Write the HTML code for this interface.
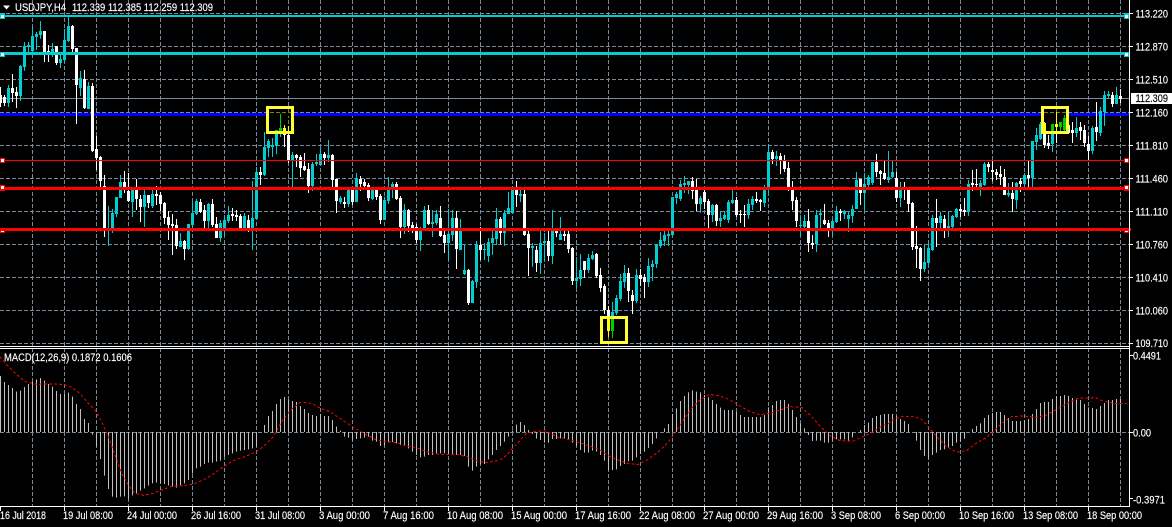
<!DOCTYPE html>
<html><head><meta charset="utf-8"><title>USDJPY,H4</title>
<style>html,body{margin:0;padding:0;background:#000;width:1172px;height:527px;overflow:hidden}svg{display:block}text{font-family:"Liberation Sans",sans-serif;font-size:11px;fill:#fff;stroke:#fff;stroke-width:.15px}</style></head>
<body>
<svg width="1172" height="527" viewBox="0 0 1172 527" xmlns="http://www.w3.org/2000/svg">
<rect width="1172" height="527" fill="#000"/>
<g stroke="#778899" stroke-width="1" stroke-dasharray="4 2" shape-rendering="crispEdges" fill="none">
<path d="M0 13.5H1129M0 46.5H1129M0 79.5H1129M0 112.5H1129M0 145.5H1129M0 178.5H1129M0 211.5H1129M0 244.5H1129M0 277.5H1129M0 310.5H1129M0 343.5H1129M0 432.5H1129"/>
<path d="M32.5 0V346M64.5 0V346M96.5 0V346M128.5 0V346M160.5 0V346M192.5 0V346M224.5 0V346M256.5 0V346M288.5 0V346M320.5 0V346M352.5 0V346M384.5 0V346M416.5 0V346M448.5 0V346M480.5 0V346M512.5 0V346M544.5 0V346M576.5 0V346M608.5 0V346M640.5 0V346M672.5 0V346M704.5 0V346M736.5 0V346M768.5 0V346M800.5 0V346M832.5 0V346M864.5 0V346M896.5 0V346M928.5 0V346M960.5 0V346M992.5 0V346M1024.5 0V346M1056.5 0V346M1088.5 0V346M1120.5 0V346"/>
<path d="M32.5 348V506M64.5 348V506M96.5 348V506M128.5 348V506M160.5 348V506M192.5 348V506M224.5 348V506M256.5 348V506M288.5 348V506M320.5 348V506M352.5 348V506M384.5 348V506M416.5 348V506M448.5 348V506M480.5 348V506M512.5 348V506M544.5 348V506M576.5 348V506M608.5 348V506M640.5 348V506M672.5 348V506M704.5 348V506M736.5 348V506M768.5 348V506M800.5 348V506M832.5 348V506M864.5 348V506M896.5 348V506M928.5 348V506M960.5 348V506M992.5 348V506M1024.5 348V506M1056.5 348V506M1088.5 348V506M1120.5 348V506"/>
</g>
<rect x="0" y="113" width="1129" height="3" fill="#0000ff" shape-rendering="crispEdges"/>
<rect x="0" y="98" width="1129" height="1" fill="#778899" shape-rendering="crispEdges"/>
<g fill="none" shape-rendering="crispEdges">
<path stroke="#00ced1" stroke-width="1" d="M8.5 85V107M20.5 65V101M24.5 42V71M28.5 42V52M32.5 27V52M36.5 32V50M40.5 21V39M52.5 43V57M60.5 55V68M64.5 29V62M68.5 17V42M80.5 71V96M88.5 82V109M108.5 206V246M112.5 209V233M116.5 197V217M120.5 175V198M132.5 187V217M144.5 190V227M152.5 190V208M180.5 233V247M188.5 224V250M192.5 202V229M196.5 199V215M208.5 203V229M220.5 220V242M224.5 215V236M228.5 206V223M244.5 213V230M252.5 181V250M256.5 167V219M264.5 132V176M268.5 139V157M272.5 138V157M276.5 130V154M280.5 114V137M292.5 152V187M312.5 162V191M316.5 154V166M320.5 148V165M328.5 140V162M340.5 196V204M348.5 187V207M356.5 173V202M372.5 187V200M384.5 197V220M388.5 177V204M392.5 182V198M404.5 204V234M420.5 227V251M424.5 206V231M432.5 210V237M436.5 210V225M448.5 209V260M452.5 210V241M460.5 219V250M464.5 245V275M472.5 280V303M476.5 241V288M484.5 243V260M488.5 238V262M492.5 231V255M496.5 208V245M504.5 210V246M508.5 192V214M512.5 186V214M520.5 187V202M532.5 243V267M540.5 228V274M544.5 233V261M552.5 210V264M560.5 217V240M576.5 257V288M580.5 254V286M588.5 254V273M592.5 251V260M612.5 302V338M616.5 295V315M620.5 274V301M624.5 265V288M636.5 269V303M648.5 258V287M652.5 260V281M656.5 244V268M660.5 232V248M664.5 228V246M668.5 229V246M672.5 197V236M676.5 192V204M680.5 180V201M684.5 176V193M688.5 181V194M700.5 196V213M712.5 204V222M720.5 211V227M724.5 211V220M728.5 200V223M732.5 188V204M748.5 199V219M752.5 196V210M764.5 185V207M768.5 144V194M776.5 151V166M800.5 215V236M804.5 215V230M816.5 210V252M820.5 209V231M832.5 219V236M836.5 206V223M844.5 210V219M848.5 212V232M852.5 205V223M856.5 172V209M864.5 173V211M868.5 175V188M872.5 162V185M888.5 151V183M892.5 160V178M900.5 182V207M924.5 245V272M928.5 243V265M932.5 215V251M940.5 212V229M948.5 212V237M952.5 215V231M956.5 208V218M968.5 180V216M980.5 180V196M984.5 162V186M1008.5 183V197M1016.5 182V209M1024.5 173V186M1032.5 141V188M1036.5 128V150M1040.5 122V140M1052.5 124V152M1060.5 122V131M1064.5 115V133M1076.5 117V137M1092.5 126V154M1100.5 107V136M1104.5 91V126M1108.5 91V98M1116.5 87V104"/>
<path stroke="#00ced1" stroke-width="3" d="M8.5 88V103M20.5 66V96M24.5 46V67M28.5 45V47M32.5 36V51M36.5 34V37M40.5 31V35M52.5 49V55M60.5 59V63M64.5 40V60M68.5 26V41M80.5 78V88M88.5 86V109M108.5 228V229M112.5 213V229M116.5 197V214M120.5 182V198M132.5 189V202M144.5 195V207M152.5 194V206M180.5 241V247M188.5 224V249M192.5 213V225M196.5 201V214M208.5 204V221M220.5 223V238M224.5 220V230M228.5 215V221M244.5 216V229M252.5 218V228M256.5 172V219M264.5 147V175M268.5 141V148M272.5 145V147M276.5 130V146M280.5 128V131M292.5 155V161M312.5 164V186M316.5 162V164M320.5 154V165M328.5 155V158M340.5 198V202M348.5 190V204M356.5 178V202M372.5 190V199M384.5 200V220M388.5 187V201M392.5 184V189M404.5 210V227M420.5 229V240M424.5 210V230M432.5 222V224M436.5 214V223M448.5 234V243M452.5 218V235M460.5 229V250M464.5 270V274M472.5 281V303M476.5 244V282M484.5 249V250M488.5 242V256M492.5 238V243M496.5 219V239M504.5 213V233M508.5 208V214M512.5 188V213M520.5 194V196M532.5 246V248M540.5 243V263M544.5 241V243M552.5 231V256M560.5 234V240M576.5 278V281M580.5 270V279M588.5 258V270M592.5 255V259M612.5 312V331M616.5 298V313M620.5 281V299M624.5 273V282M636.5 275V301M648.5 266V282M652.5 264V267M656.5 244V264M660.5 240V246M664.5 235V241M668.5 234V236M672.5 197V235M676.5 194V198M680.5 184V199M684.5 183V185M688.5 181V185M700.5 198V204M712.5 205V215M720.5 218V221M724.5 215V219M728.5 202V220M732.5 200V203M748.5 204V215M752.5 199V205M764.5 188V203M768.5 152V189M776.5 156V159M800.5 225V226M804.5 221V227M816.5 215V244M820.5 213V215M832.5 221V231M836.5 211V222M844.5 211V214M848.5 215V219M852.5 209V216M856.5 180V209M864.5 184V193M868.5 177V185M872.5 162V183M888.5 177V180M892.5 172V177M900.5 187V198M924.5 262V269M928.5 248V263M932.5 218V250M940.5 216V223M948.5 226V228M952.5 216V227M956.5 209V217M968.5 184V212M980.5 183V187M984.5 164V185M1008.5 193V195M1016.5 183V200M1024.5 175V184M1032.5 141V178M1036.5 135V142M1040.5 124V139M1052.5 124V144M1060.5 122V127M1064.5 118V130M1076.5 128V133M1092.5 128V151M1100.5 111V133M1104.5 95V112M1108.5 94V96M1116.5 95V104"/>
<path stroke="#fff" stroke-width="1" d="M0.5 87V107M4.5 95V106M12.5 74V102M16.5 87V108M44.5 31V62M48.5 45V62M56.5 46V65M72.5 25V55M76.5 48V124M84.5 70V109M92.5 83V152M96.5 136V170M100.5 156V187M104.5 175V237M124.5 171V193M128.5 173V202M136.5 179V210M140.5 195V222M148.5 195V208M156.5 186V205M160.5 192V211M164.5 202V224M168.5 211V240M172.5 214V255M176.5 219V249M184.5 240V260M200.5 199V213M204.5 205V231M212.5 199V227M216.5 217V238M232.5 208V221M236.5 210V221M240.5 214V230M248.5 215V232M260.5 167V185M284.5 125V147M288.5 126V163M296.5 154V167M300.5 155V177M304.5 153V171M308.5 163V193M324.5 152V165M332.5 154V188M336.5 179V213M344.5 197V208M352.5 187V205M360.5 176V191M364.5 179V188M368.5 183V201M376.5 187V200M380.5 194V224M396.5 182V200M400.5 196V238M408.5 209V232M412.5 222V233M416.5 224V243M428.5 205V225M440.5 206V237M444.5 229V253M456.5 211V269M468.5 269V305M480.5 227V260M500.5 217V244M516.5 181V207M524.5 190V236M528.5 230V276M536.5 246V272M548.5 229V261M556.5 228V237M564.5 231V241M568.5 231V253M572.5 247V285M584.5 261V278M596.5 253V278M600.5 268V292M604.5 284V314M608.5 306V337M628.5 268V302M632.5 290V314M640.5 269V286M644.5 274V298M692.5 177V199M696.5 179V211M704.5 190V209M708.5 199V229M716.5 204V226M736.5 197V217M740.5 210V223M744.5 205V227M756.5 192V203M760.5 199V211M772.5 150V164M780.5 153V174M784.5 155V172M788.5 162V191M792.5 181V210M796.5 197V227M808.5 209V252M812.5 235V249M824.5 204V225M828.5 220V237M840.5 209V221M860.5 179V205M876.5 154V177M880.5 170V185M884.5 161V180M896.5 172V202M904.5 182V200M908.5 187V212M912.5 202V250M916.5 226V268M920.5 247V281M936.5 199V247M944.5 215V238M960.5 204V217M964.5 198V216M972.5 170V191M976.5 169V188M988.5 162V172M992.5 160V181M996.5 169V180M1000.5 166V185M1004.5 169V195M1012.5 182V212M1020.5 178V192M1028.5 160V188M1044.5 122V148M1048.5 135V149M1056.5 112V143M1068.5 118V134M1072.5 122V143M1080.5 122V140M1084.5 125V147M1088.5 136V161M1096.5 102V141M1112.5 92V107M1120.5 89V103"/>
<path stroke="#fff" stroke-width="3" d="M0.5 95V103M4.5 97V103M12.5 88V93M16.5 92V96M44.5 31V52M48.5 51V54M56.5 46V63M72.5 26V49M76.5 48V85M84.5 79V108M92.5 86V151M96.5 149V158M100.5 157V181M104.5 186V229M124.5 182V190M128.5 191V201M136.5 190V199M140.5 199V207M148.5 195V203M156.5 194V196M160.5 195V204M164.5 203V218M168.5 217V225M172.5 224V226M176.5 225V246M184.5 241V249M200.5 202V212M204.5 210V221M212.5 204V225M216.5 224V238M232.5 214V216M236.5 215V217M240.5 216V229M248.5 220V228M260.5 172V175M284.5 128V135M288.5 135V161M296.5 155V158M300.5 157V168M304.5 166V170M308.5 169V186M324.5 154V158M332.5 155V180M336.5 179V201M344.5 202V204M352.5 189V202M360.5 179V184M364.5 182V186M368.5 185V198M376.5 190V197M380.5 196V220M396.5 184V199M400.5 198V227M408.5 210V226M412.5 225V228M416.5 227V240M428.5 210V224M440.5 218V236M444.5 235V243M456.5 218V249M468.5 270V303M480.5 245V250M500.5 219V233M516.5 188V195M524.5 194V235M528.5 234V248M536.5 250V263M548.5 241V256M556.5 230V233M564.5 234V236M568.5 234V249M572.5 248V281M584.5 261V270M596.5 254V276M600.5 275V288M604.5 286V310M608.5 310V331M628.5 273V291M632.5 295V301M640.5 275V279M644.5 277V282M692.5 181V191M696.5 190V204M704.5 192V202M708.5 201V215M716.5 205V221M736.5 200V215M740.5 214V215M744.5 214V215M756.5 199V201M760.5 200V202M772.5 152V159M780.5 156V161M784.5 160V169M788.5 168V189M792.5 188V201M796.5 200V221M808.5 221V243M812.5 243V245M824.5 220V224M828.5 223V231M840.5 211V213M860.5 179V193M876.5 162V172M880.5 171V174M884.5 173V179M896.5 178V198M904.5 187V190M908.5 189V204M912.5 203V247M916.5 246V249M920.5 248V269M936.5 218V223M944.5 219V229M960.5 209V211M964.5 210V212M972.5 183V185M976.5 184V185M988.5 164V167M992.5 170V172M996.5 172V175M1000.5 174V177M1004.5 177V195M1012.5 193V199M1020.5 181V184M1028.5 175V178M1044.5 123V145M1048.5 143V146M1056.5 124V127M1068.5 125V133M1072.5 130V133M1080.5 127V131M1084.5 130V143M1088.5 144V151M1096.5 127V132M1112.5 95V104M1120.5 96V99"/>
</g>
<g shape-rendering="crispEdges">
<rect x="0" y="13" width="5" height="6" fill="#00ced1"/><rect x="1" y="15" width="3" height="3" fill="#fff"/>
<rect x="0" y="52" width="5" height="5" fill="#00ced1"/><rect x="1" y="53" width="3" height="3" fill="#fff"/>
<rect x="0" y="158" width="5" height="5" fill="#ff0000"/><rect x="1" y="159" width="3" height="3" fill="#fff"/>
<rect x="0" y="185" width="5" height="6" fill="#ff0000"/><rect x="1" y="186" width="3" height="3" fill="#fff"/>
<rect x="0" y="228" width="5" height="5" fill="#ff0000"/><rect x="1" y="231" width="3" height="1" fill="#fff"/>
<rect x="1124" y="13" width="5" height="6" fill="#00ced1"/><rect x="1125" y="15" width="3" height="3" fill="#fff"/>
<rect x="1124" y="52" width="5" height="5" fill="#00ced1"/><rect x="1125" y="53" width="3" height="3" fill="#fff"/>
<rect x="1124" y="158" width="5" height="5" fill="#ff0000"/><rect x="1125" y="159" width="3" height="3" fill="#fff"/>
<rect x="1124" y="185" width="5" height="6" fill="#ff0000"/><rect x="1125" y="186" width="3" height="3" fill="#fff"/>
<rect x="1124" y="228" width="5" height="5" fill="#ff0000"/><rect x="1125" y="231" width="3" height="1" fill="#fff"/>
<rect x="5" y="15" width="1119" height="2" fill="#00ced1"/>
<rect x="5" y="52" width="1119" height="3" fill="#00ced1"/>
<rect x="5" y="160" width="1119" height="1" fill="#ff0000"/>
<rect x="5" y="187" width="1119" height="3" fill="#ff0000"/>
<rect x="0" y="228" width="1131" height="3" fill="#ff0000"/>
</g>
<g shape-rendering="crispEdges">
<rect x="266" y="106" width="28" height="28" fill="#ffff00" style="mix-blend-mode:multiply"/>
<rect x="1041" y="106" width="28" height="28" fill="#ffff00" style="mix-blend-mode:multiply"/>
<rect x="600" y="316" width="28" height="28" fill="#ffff00" style="mix-blend-mode:multiply"/>
<rect x="267.5" y="107.5" width="25" height="25" fill="none" stroke="#ffff33" stroke-width="3"/>
<rect x="1042.5" y="107.5" width="25" height="25" fill="none" stroke="#ffff33" stroke-width="3"/>
<rect x="601.5" y="317.5" width="25" height="25" fill="none" stroke="#ffff33" stroke-width="3"/>
</g>
<path transform="translate(0 340) scale(1 .33333)" fill="none" stroke="#c0c0c0" stroke-width="1" shape-rendering="crispEdges" d="M.5 108V276M4.5 126V276M8.5 135V276M12.5 144V276M16.5 155V276M20.5 152V276M24.5 141V276M28.5 132V276M32.5 125V276M36.5 118V276M40.5 114V276M44.5 122V276M48.5 132V276M52.5 140V276M56.5 153V276M60.5 162V276M64.5 162V276M68.5 158V276M72.5 170V276M76.5 192V276M80.5 207V276M84.5 237V276M88.5 249V276M92.5 284V276M96.5 320V276M100.5 357V276M104.5 407V276M108.5 447V276M112.5 470V276M116.5 473V276M120.5 470V276M124.5 469V276M128.5 478V276M132.5 466V276M136.5 460V276M140.5 452V276M144.5 445V276M148.5 437V276M152.5 430V276M156.5 428V276M160.5 430V276M164.5 432V276M168.5 436V276M172.5 440V276M176.5 443V276M180.5 435V276M184.5 430V276M188.5 420V276M192.5 400V276M196.5 385V276M200.5 380V276M204.5 372V276M208.5 368V276M212.5 368V276M216.5 365V276M220.5 362V276M224.5 350V276M228.5 345V276M232.5 340V276M236.5 335V276M240.5 332V276M244.5 330V276M248.5 328V276M252.5 325V276M256.5 320V276M264.5 255V276M268.5 228V276M272.5 213V276M276.5 192V276M280.5 177V276M284.5 171V276M288.5 178V276M292.5 183V276M296.5 186V276M300.5 198V276M304.5 207V276M308.5 219V276M312.5 225V276M316.5 228V276M320.5 222V276M324.5 228V276M328.5 228V276M332.5 240V276M336.5 260V276M340.5 272V276M344.5 290V276M348.5 293V276M352.5 302V276M356.5 297V276M360.5 295V276M364.5 293V276M368.5 290V276M372.5 302V276M376.5 305V276M380.5 318V276M384.5 316V276M388.5 308V276M392.5 306V276M396.5 310V276M400.5 315V276M404.5 318V276M408.5 325V276M412.5 335V276M416.5 345V276M420.5 352V276M424.5 350V276M428.5 345V276M432.5 345V276M436.5 340V276M440.5 340V276M444.5 340V276M448.5 345V276M452.5 345V276M456.5 345V276M460.5 345V276M464.5 348V276M468.5 380V276M472.5 392V276M476.5 380V276M480.5 372V276M484.5 372V276M488.5 358V276M492.5 345V276M496.5 330V276M500.5 318V276M504.5 305V276M508.5 290V276M512.5 272V276M516.5 254V276M520.5 246V276M524.5 255V276M528.5 270V276M532.5 282V276M536.5 296V276M540.5 300V276M544.5 308V276M548.5 308V276M552.5 297V276M556.5 297V276M560.5 295V276M564.5 295V276M568.5 298V276M572.5 308V276M576.5 318V276M580.5 330V276M584.5 338V276M588.5 338V276M592.5 332V276M596.5 335V276M600.5 345V276M604.5 362V276M608.5 390V276M612.5 390V276M616.5 388V276M620.5 378V276M624.5 372V276M628.5 364V276M632.5 362V276M636.5 352V276M640.5 342V276M644.5 335V276M648.5 324V276M652.5 312V276M656.5 295V276M664.5 265V276M668.5 252V276M672.5 222V276M676.5 205V276M680.5 183V276M684.5 168V276M688.5 157V276M692.5 151V276M696.5 155V276M700.5 157V276M704.5 165V276M708.5 172V276M712.5 180V276M716.5 192V276M720.5 203V276M724.5 210V276M728.5 210V276M732.5 210V276M736.5 216V276M740.5 225V276M744.5 231V276M748.5 231V276M752.5 231V276M756.5 231V276M760.5 231V276M764.5 225V276M768.5 202V276M772.5 195V276M776.5 183V276M780.5 180V276M784.5 180V276M788.5 192V276M792.5 210V276M796.5 231V276M800.5 250V276M804.5 265V276M808.5 285V276M812.5 303V276M816.5 302V276M820.5 302V276M824.5 308V276M828.5 308V276M832.5 302V276M836.5 298V276M840.5 298V276M844.5 298V276M848.5 302V276M852.5 292V276M860.5 270V276M864.5 255V276M868.5 248V276M872.5 234V276M876.5 228V276M880.5 225V276M884.5 222V276M888.5 222V276M892.5 222V276M896.5 228V276M900.5 237V276M904.5 243V276M908.5 252V276M916.5 302V276M920.5 330V276M924.5 348V276M928.5 356V276M932.5 345V276M936.5 338V276M940.5 330V276M944.5 328V276M948.5 322V276M952.5 318V276M956.5 308V276M960.5 305V276M964.5 296V276M972.5 267V276M976.5 258V276M980.5 250V276M984.5 234V276M988.5 225V276M992.5 219V276M996.5 216V276M1000.5 216V276M1004.5 225V276M1008.5 234V276M1012.5 243V276M1016.5 243V276M1020.5 243V276M1024.5 240V276M1028.5 237V276M1032.5 222V276M1036.5 207V276M1040.5 189V276M1044.5 186V276M1048.5 186V276M1052.5 177V276M1056.5 168V276M1060.5 168V276M1064.5 165V276M1068.5 168V276M1072.5 174V276M1076.5 177V276M1080.5 180V276M1084.5 192V276M1088.5 202V276M1092.5 204V276M1096.5 207V276M1100.5 198V276M1104.5 189V276M1108.5 180V276M1112.5 180V276M1116.5 177V276M1120.5 177V276"/>
<polyline transform="translate(0 340) scale(.33333)" fill="none" stroke="#ff0000" stroke-width="3" stroke-dasharray="8 7" shape-rendering="crispEdges" points="0,50 12,65 40,95 75,125 110,133 150,132 190,133 215,142 240,160 265,190 285,210 305,245 325,290 345,345 365,400 385,435 405,460 430,466 460,460 490,448 520,438 550,437 580,432 610,420 640,402 670,380 700,362 735,350 765,337 790,320 820,290 845,245 870,212 900,188 920,187 940,192 960,205 990,215 1015,232 1040,248 1070,268 1100,285 1130,300 1160,305 1190,308 1220,318 1250,323 1280,335 1310,342 1340,344 1370,343 1400,350 1430,362 1460,368 1500,360 1520,345 1550,312 1580,280 1610,273 1640,273 1670,290 1700,297 1730,305 1760,315 1790,325 1800,330 1830,350 1860,362 1890,372 1915,373 1945,358 1975,335 2000,312 2025,280 2050,240 2075,205 2100,180 2130,163 2160,168 2190,180 2220,198 2250,215 2280,224 2310,220 2340,210 2370,200 2405,202 2430,225 2460,258 2490,287 2520,302 2560,303 2590,290 2620,275 2650,255 2660,255 2680,238 2705,230 2745,230 2765,238 2785,260 2810,290 2840,320 2870,337 2900,332 2925,312 2955,295 2980,275 3005,250 3035,230 3070,228 3110,232 3140,225 3170,208 3205,188 3235,175 3285,173 3310,183 3340,190 3380,190"/>
<g shape-rendering="crispEdges" fill="none" stroke="#fff" stroke-width="1">
<path d="M0 346.5H1130M0 348.5H1129M1129.5 0V348M1129.5 348V506.5M0 506.5H1130"/>
<path d="M1129 13.5h4M1129 46.5h4M1129 79.5h4M1129 112.5h4M1129 145.5h4M1129 178.5h4M1129 211.5h4M1129 244.5h4M1129 277.5h4M1129 310.5h4M1129 343.5h4M1129 355.5h4M1129 432.5h4M1129 498.5h4"/>
<path d="M0.5 506V511M64.5 506V511M128.5 506V511M192.5 506V511M256.5 506V511M320.5 506V511M384.5 506V511M448.5 506V511M512.5 506V511M576.5 506V511M640.5 506V511M704.5 506V511M768.5 506V511M832.5 506V511M896.5 506V511M960.5 506V511M1024.5 506V511M1088.5 506V511"/>
</g>
<polygon points="3,5.5 10,5.5 6.5,9.5" fill="#fff"/>
<text x="15" y="11" textLength="51" lengthAdjust="spacingAndGlyphs">USDJPY,H4</text>
<text x="72" y="11" textLength="141" lengthAdjust="spacingAndGlyphs">112.339 112.385 112.259 112.309</text>
<text x="4" y="361" textLength="128" lengthAdjust="spacingAndGlyphs">MACD(12,26,9) 0.1872 0.1606</text>
<rect x="1131" y="93" width="41" height="11" fill="#fff" shape-rendering="crispEdges"/>
<text x="1135.5" y="17.5" textLength="32.5" lengthAdjust="spacingAndGlyphs">113.220</text>
<text x="1135.5" y="50.5" textLength="32.5" lengthAdjust="spacingAndGlyphs">112.870</text>
<text x="1135.5" y="83.5" textLength="32.5" lengthAdjust="spacingAndGlyphs">112.510</text>
<text x="1135.5" y="102" textLength="32.5" lengthAdjust="spacingAndGlyphs" style="fill:#000;stroke:#000">112.309</text>
<text x="1135.5" y="116.5" textLength="32.5" lengthAdjust="spacingAndGlyphs">112.160</text>
<text x="1135.5" y="149.5" textLength="32.5" lengthAdjust="spacingAndGlyphs">111.810</text>
<text x="1135.5" y="182.5" textLength="32.5" lengthAdjust="spacingAndGlyphs">111.460</text>
<text x="1135.5" y="215.5" textLength="32.5" lengthAdjust="spacingAndGlyphs">111.110</text>
<text x="1135.5" y="248.5" textLength="32.5" lengthAdjust="spacingAndGlyphs">110.760</text>
<text x="1135.5" y="281.5" textLength="32.5" lengthAdjust="spacingAndGlyphs">110.410</text>
<text x="1135.5" y="314.5" textLength="32.5" lengthAdjust="spacingAndGlyphs">110.060</text>
<text x="1135.5" y="347" textLength="32.5" lengthAdjust="spacingAndGlyphs">109.710</text>
<text x="1133" y="359.5" textLength="28" lengthAdjust="spacingAndGlyphs">0.4491</text>
<text x="1133" y="436.5" textLength="18" lengthAdjust="spacingAndGlyphs">0.00</text>
<text x="1133" y="503.5" textLength="32" lengthAdjust="spacingAndGlyphs">-0.3971</text>
<text x="0" y="519" textLength="46" lengthAdjust="spacingAndGlyphs">16 Jul 2018</text>
<text x="63" y="519" textLength="50" lengthAdjust="spacingAndGlyphs">19 Jul 08:00</text>
<text x="127" y="519" textLength="50" lengthAdjust="spacingAndGlyphs">24 Jul 00:00</text>
<text x="191" y="519" textLength="50" lengthAdjust="spacingAndGlyphs">26 Jul 16:00</text>
<text x="255" y="519" textLength="50" lengthAdjust="spacingAndGlyphs">31 Jul 08:00</text>
<text x="319" y="519" textLength="51" lengthAdjust="spacingAndGlyphs">3 Aug 00:00</text>
<text x="383" y="519" textLength="51" lengthAdjust="spacingAndGlyphs">7 Aug 16:00</text>
<text x="447" y="519" textLength="56" lengthAdjust="spacingAndGlyphs">10 Aug 08:00</text>
<text x="511" y="519" textLength="56" lengthAdjust="spacingAndGlyphs">15 Aug 00:00</text>
<text x="575" y="519" textLength="56" lengthAdjust="spacingAndGlyphs">17 Aug 16:00</text>
<text x="639" y="519" textLength="56" lengthAdjust="spacingAndGlyphs">22 Aug 08:00</text>
<text x="703" y="519" textLength="56" lengthAdjust="spacingAndGlyphs">27 Aug 00:00</text>
<text x="767" y="519" textLength="56" lengthAdjust="spacingAndGlyphs">29 Aug 16:00</text>
<text x="831" y="519" textLength="50" lengthAdjust="spacingAndGlyphs">3 Sep 08:00</text>
<text x="895" y="519" textLength="50" lengthAdjust="spacingAndGlyphs">6 Sep 00:00</text>
<text x="959" y="519" textLength="55" lengthAdjust="spacingAndGlyphs">10 Sep 16:00</text>
<text x="1023" y="519" textLength="55" lengthAdjust="spacingAndGlyphs">13 Sep 08:00</text>
<text x="1087" y="519" textLength="55" lengthAdjust="spacingAndGlyphs">18 Sep 00:00</text>
</svg>
</body></html>
